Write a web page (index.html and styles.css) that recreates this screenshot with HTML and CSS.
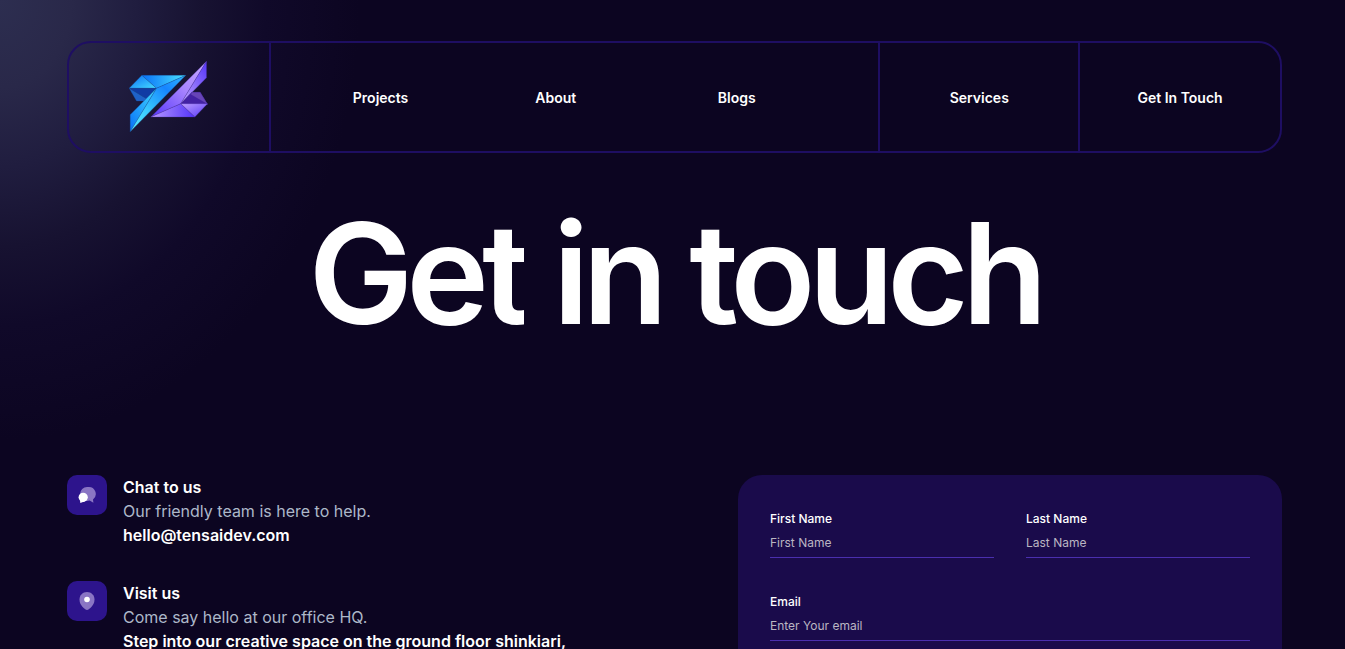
FILE: index.html
```html
<!DOCTYPE html>
<html lang="en">
<head>
<meta charset="utf-8">
<meta name="viewport" content="width=device-width, initial-scale=1">
<title>Get in touch</title>
<link rel="stylesheet" href="styles.css">
</head>
<body>
<div class="page">
  <header class="navbar">
    <a class="navbar-logo" href="#" aria-label="Home">
      <svg class="logo" viewBox="34 27 236 213" aria-hidden="true">
        <defs>
          <linearGradient id="b1" x1="0" x2="1"><stop offset="0" stop-color="#0870f8"/><stop offset="1" stop-color="#4ce4ff"/></linearGradient>
          <linearGradient id="b2" x1="0" y1="0" x2="1" y2="1"><stop offset="0" stop-color="#0a6cf5"/><stop offset="1" stop-color="#45dcff"/></linearGradient>
          <linearGradient id="b3" x1="1" y1="0" x2="0" y2="1"><stop offset="0" stop-color="#2fb4ff"/><stop offset=".3" stop-color="#1685ff"/><stop offset=".65" stop-color="#38c8ff"/><stop offset="1" stop-color="#5ff0ff"/></linearGradient>
          <linearGradient id="b4" x1="1" y1="0" x2="0" y2="1"><stop offset="0" stop-color="#42dcff"/><stop offset="1" stop-color="#0870f8"/></linearGradient>
          <linearGradient id="p1" x1="1" y1="0" x2="0" y2="1"><stop offset="0" stop-color="#c5a8ff"/><stop offset=".45" stop-color="#a884ff"/><stop offset="1" stop-color="#5636fa"/></linearGradient>
          <linearGradient id="p2" x1="1" y1="0" x2="0" y2="1"><stop offset="0" stop-color="#5434f8"/><stop offset="1" stop-color="#c4a8ff"/></linearGradient>
          <linearGradient id="p3" x1="0" x2="1"><stop offset="0" stop-color="#b698ff"/><stop offset="1" stop-color="#5333fa"/></linearGradient>
          <linearGradient id="p4" x1="0" y1="0" x2="1" y2="1"><stop offset="0" stop-color="#bd9fff"/><stop offset="1" stop-color="#5737f8"/></linearGradient>
        </defs>
        <g stroke="#164e9c" stroke-opacity=".6" stroke-width="1.5" stroke-linejoin="round">
          <path fill="url(#b1)" d="M72 70H204L116 109Z"/>
          <path fill="url(#b2)" d="M72 70L116 109H34Z"/>
          <path fill="#103ba4" d="M34 109H116L86 140Z"/>
          <path fill="#1e62c8" d="M34 109L86 140L79 147H56Z"/>
          <path fill="url(#b4)" d="M116 109L37 188V239L50 218Z"/>
          <path fill="url(#b3)" d="M204 70L116 109L37 239Z"/>
        </g>
        <g stroke="#4a2fa6" stroke-opacity=".6" stroke-width="1.5" stroke-linejoin="round">
          <path fill="url(#p1)" d="M266 28L99 195L189 155Z"/>
          <path fill="url(#p2)" d="M266 28V77L189 155Z"/>
          <path fill="#4424a5" d="M189 155L222 121H247L269 157Z"/>
          <path fill="#6744b8" d="M247 121L269 157L218 130L222 121Z"/>
          <path fill="#4322a4" d="M218 127L269 157H189Z"/>
          <path fill="url(#p3)" d="M99 195L189 155L231 195Z"/>
          <path fill="url(#p4)" d="M189 155H269L231 195Z"/>
        </g>
      </svg>
    </a>
    <nav class="navbar-links" aria-label="Main">
      <a href="#">Projects</a>
      <a href="#">About</a>
      <a href="#">Blogs</a>
    </nav>
    <a class="navbar-cell navbar-services" href="#">Services</a>
    <a class="navbar-cell" href="#">Get In Touch</a>
  </header>

  <main>
    <h1 class="title"><span>Get</span> <span>in</span> <span>touch</span></h1>
    <div class="columns">
      <div class="contacts">
        <section class="contact">
          <div class="contact-icon">
            <svg width="18" height="18" viewBox="0 0 18 18" aria-hidden="true">
              <path fill="#8a75c4" d="M10 1a7 7 0 0 1 5 12.500l.4 3.300-3.800-2.300A7 7 0 1 1 10 1Z"/>
              <circle cx="5.200" cy="11.300" r="4.600" fill="#fff"/>
              <path fill="#fff" d="M2 13.500L2.300 17L7 15.300Z"/>
            </svg>
          </div>
          <div class="contact-text">
            <h2>Chat to us</h2>
            <p>Our friendly team is here to help.</p>
            <a href="mailto:hello@tensaidev.com">hello@tensaidev.com</a>
          </div>
        </section>
        <section class="contact">
          <div class="contact-icon">
            <svg width="18" height="18" viewBox="0 0 18 18" aria-hidden="true">
              <path fill="#8a75c4" d="M9 0C4.600 0 1.500 3.400 1.500 7.500c0 5 3.500 8 5.700 9.700 1.200.9 2.400.9 3.600 0 2.200-1.700 5.700-4.700 5.700-9.700C16.500 3.400 13.400 0 9 0Z"/>
              <circle cx="9" cy="7.500" r="2.800" fill="#fff"/>
            </svg>
          </div>
          <div class="contact-text">
            <h2>Visit us</h2>
            <p>Come say hello at our office HQ.</p>
            <a href="#">Step into our creative space on the ground floor shinkiari,</a>
          </div>
        </section>
      </div>

      <form class="form">
        <div class="field">
          <label for="first">First Name</label>
          <input id="first" type="text" placeholder="First Name">
        </div>
        <div class="field">
          <label for="last">Last Name</label>
          <input id="last" type="text" placeholder="Last Name">
        </div>
        <div class="field field-wide">
          <label for="email">Email</label>
          <input id="email" type="email" placeholder="Enter Your email">
        </div>
      </form>
    </div>
  </main>
</div>
</body>
</html>
```
FILE: styles.css
```css
* {
  box-sizing: border-box;
}

html {
  height: 100%;
  overflow: hidden;
}

body {
  height: 100%;
  margin: 0;
  overflow: hidden;
  color: #fff;
  font-family: Inter, "Liberation Sans", sans-serif;
  font-size: 16px;
  line-height: 24px;
  background:
    radial-gradient(ellipse 360px 440px at 0 0,
      #2d2e50 0%, #292849 20%, #201d3f 38%, #171231 56%, #100929 74%, #0c0521 100%)
    #0c0521;
}

a {
  color: inherit;
  text-decoration: none;
}

.page {
  padding: 41px 63px 0 67px;
}

.navbar {
  display: grid;
  grid-template-columns: 1.01fr 3.05fr 1fr 1fr;
  height: 112px;
  border: 2px solid #1e0e62;
  border-radius: 24px;
  font-size: 14px;
  font-weight: 600;
}

.navbar-logo,
.navbar-cell {
  display: flex;
  align-items: center;
  justify-content: center;
}

.navbar-logo,
.navbar-links,
.navbar-services {
  border-right: 2px solid #1e0e62;
}

.navbar-logo {
  padding-bottom: 2px;
}

.navbar-cell,
.navbar-links {
  padding-top: 2px;
}

.logo {
  width: 79px;
  height: 71px;
}

.navbar-links {
  display: grid;
  grid-template-columns: repeat(3, 1fr);
  align-items: center;
  column-gap: 104px;
  padding-left: 82px;
  padding-right: 82px;
}

.title {
  margin: 48px 0 0;
  font-size: 140px;
  font-weight: 600;
  letter-spacing: -0.05em;
  line-height: 144px;
  text-align: center;
}

.title span {
  display: inline-block;
  overflow: hidden;
  vertical-align: top;
}

.columns {
  display: grid;
  grid-template-columns: 1fr 544px;
  column-gap: 64px;
  align-items: start;
  margin-top: 130px;
}

.contacts {
  display: grid;
  row-gap: 34px;
}

.contact {
  display: flex;
  gap: 16px;
}

.contact-icon {
  display: flex;
  align-items: center;
  justify-content: center;
  width: 40px;
  height: 40px;
  border-radius: 10px;
  background: #2d148c;
}

.contact-text h2,
.contact-text p {
  margin: 0;
  font-size: 16px;
}

.contact-text h2,
.contact-text a {
  font-weight: 600;
}

.contact-text p {
  color: #adb8c9;
}

.form {
  display: grid;
  grid-template-columns: 1fr 1fr;
  gap: 32px;
  min-height: 480px;
  align-content: start;
  padding: 32px;
  border-radius: 24px;
  background: #1a0b4b;
}

.field-wide {
  grid-column: 1 / -1;
}

.field label {
  display: block;
  font-size: 12px;
  font-weight: 500;
  line-height: 24px;
}

.field input {
  display: block;
  width: 100%;
  height: 27px;
  padding: 0 0 4px;
  border: 0;
  border-bottom: 1px solid #4a2fae;
  outline: 0;
  color: #fff;
  font: inherit;
  font-size: 12px;
  background: transparent;
}

.field input::placeholder {
  color: #bab6c2;
  opacity: 1;
}
```
